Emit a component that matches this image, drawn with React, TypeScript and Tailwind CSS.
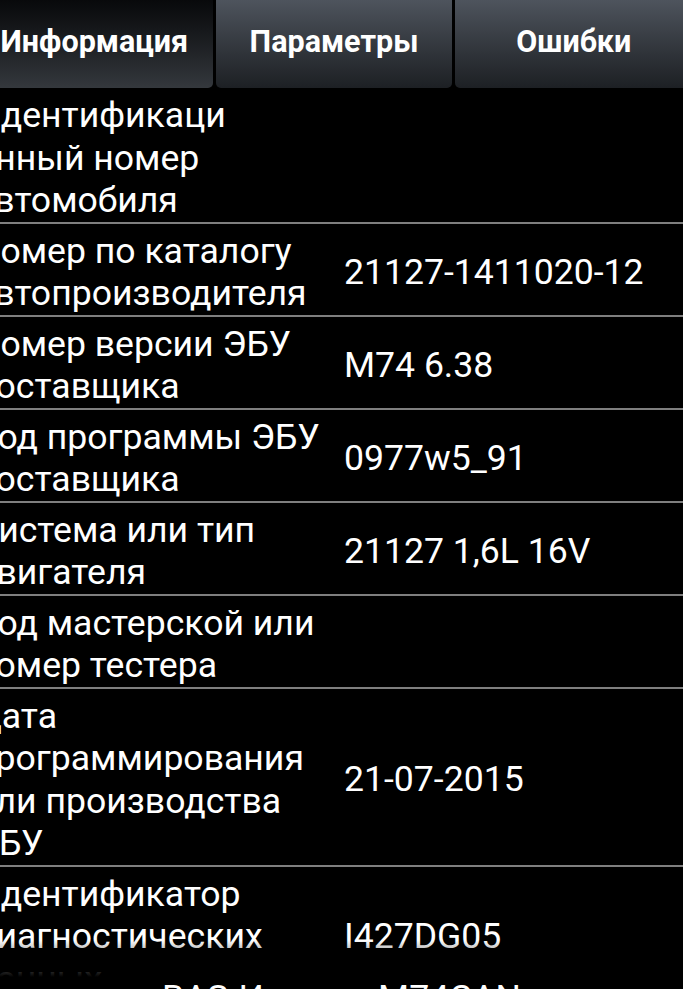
const rows: { label: string[]; value: string }[] = [
  { label: ["Идентификаци", "онный номер", "автомобиля"], value: "" },
  { label: ["Номер по каталогу", "автопроизводителя"], value: "21127-1411020-12" },
  { label: ["Номер версии ЭБУ", "поставщика"], value: "M74 6.38" },
  { label: ["Код программы ЭБУ", "поставщика"], value: "0977w5_91" },
  { label: ["Система или тип", "двигателя"], value: "21127 1,6L 16V" },
  { label: ["Код мастерской или", "номер тестера"], value: "" },
  { label: ["Дата", "программирования", "или производства", "ЭБУ"], value: "21-07-2015" },
  { label: ["Идентификатор", "диагностических", "данных"], value: "I427DG05" },
]

const tabs = ["Информация", "Параметры", "Ошибки"]

export default function App() {
  return (
    <div
      className="relative w-[683px] h-[989px] overflow-hidden bg-black text-white"
      style={{ fontFamily: "Roboto, 'Noto Sans', sans-serif" }}
    >
      <div className="-ml-[24px] w-[716px]">
        {/* Tabs */}
        <div className="flex gap-[3px] h-[88px]">
          {tabs.map((t, i) => (
            <div
              key={t}
              className={
                i === 0
                  ? "flex-1 flex items-center justify-center pb-[5px] rounded-b-[5px] bg-gradient-to-b from-[#08090b] to-[#34383d]"
                  : "flex-1 flex items-center justify-center pb-[5px] rounded-b-[5px] bg-gradient-to-b from-[#4e545d] to-[#1d2024]"
              }
            >
              <span className="text-[30.5px] font-bold">{t}</span>
            </div>
          ))}
        </div>

        {/* Info table */}
        <div>
          {rows.map((r, i) => (
            <div
              key={i}
              className="grid grid-cols-[368px_1fr] border-b-2 border-[#7f7f7f] pt-[6px] text-[35.6px] leading-[42.5px]"
            >
              <div className="-ml-[1px] whitespace-nowrap">
                {r.label.map((l) => (
                  <div key={l}>{l}</div>
                ))}
              </div>
              <div className="flex items-center whitespace-nowrap">{r.value}</div>
            </div>
          ))}
        </div>
      </div>

      {/* fading edge + footer */}
      <div className="absolute left-0 right-0 top-[940px] h-[37px] bg-gradient-to-b from-transparent to-black" />
      <div className="absolute left-0 right-0 top-[977px] h-[42px] bg-black text-[35.6px] leading-[42px] flex justify-center">
        <span className="mr-[12px]">ВАЗ-Итэлма</span>
        <span>M74CAN</span>
      </div>
    </div>
  )
}
